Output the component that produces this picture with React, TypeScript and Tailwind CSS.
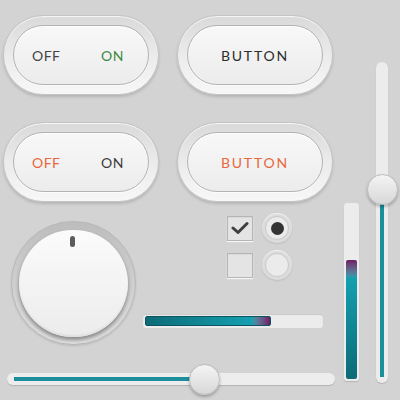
import React from "react";

const font = { fontFamily: "Lato, 'Open Sans', sans-serif" };

function Pill({ children }: { children: React.ReactNode }) {
  return (
    <div className="w-[156px] h-[80px] rounded-full p-[9px] border border-[#c4c4c4] bg-gradient-to-b from-[#d9d9d9] via-[#ebebeb] to-[#f7f7f7] shadow-[0_2px_3px_rgba(0,0,0,0.15),inset_0_1px_1px_rgba(255,255,255,0.8)]">
      <div className="w-full h-full rounded-full bg-gradient-to-b from-[#f8f8f8] to-[#ececec] border border-[#b3b3b3] shadow-[inset_0_1px_1px_rgba(255,255,255,0.9),0_1px_1px_rgba(255,255,255,0.7)] flex items-center justify-center text-[14px]" style={font}>
        {children}
      </div>
    </div>
  );
}

export default function App() {
  return (
    <div className="w-[400px] h-[400px] bg-[#d3d3d3] flex overflow-hidden" style={font}>
      {/* main column */}
      <div className="w-[342px] flex flex-col">
        <div className="flex gap-[18px] pl-[3px] pt-[15px]">
          <Pill>
            <div className="flex w-full justify-between pl-[18px] pr-[24px] tracking-[0.5px]">
              <span className="text-[#454545]">OFF</span>
              <span className="text-[#3f8a45]">ON</span>
            </div>
          </Pill>
          <Pill>
            <span className="text-[#2c2c2c] tracking-[1.8px]">BUTTON</span>
          </Pill>
        </div>
        <div className="flex gap-[18px] pl-[3px] pt-[27px]">
          <Pill>
            <div className="flex w-full justify-between pl-[18px] pr-[24px] tracking-[0.5px]">
              <span className="text-[#e8683e]">OFF</span>
              <span className="text-[#3c3c3c]">ON</span>
            </div>
          </Pill>
          <Pill>
            <span className="text-[#e8683e] tracking-[1.8px]">BUTTON</span>
          </Pill>
        </div>
        <div className="flex pt-[15px]">
          {/* knob */}
          <div className="ml-[11px] mt-[4px] w-[125px] h-[124px] rounded-full border border-[#b8b8b8] bg-gradient-to-b from-[#bdbdbd] to-[#e2e2e2] shadow-[0_1px_2px_rgba(0,0,0,0.12)] flex items-center justify-center">
            <div className="relative w-[109px] h-[107px] rounded-full bg-gradient-to-b from-[#fbfbfb] to-[#ececec] shadow-[0_3px_4px_rgba(0,0,0,0.4),inset_0_-2px_2px_rgba(0,0,0,0.05)]">
              <div className="absolute left-[51px] top-[6px] w-[5px] h-[11px] rounded-full bg-[#5c5c5c]" />
            </div>
          </div>
          <div className="ml-[7px] flex flex-col">
            <div className="ml-[84px] -mt-[4px] grid grid-cols-[26px_30px] gap-x-[9px] gap-y-[7px] items-center">
              <div className="w-[26px] h-[25px] border border-[#b5b5b5] bg-[#e4e4e4] shadow-[0_1px_1px_rgba(255,255,255,0.8),inset_0_1px_1px_rgba(0,0,0,0.05)] flex items-center justify-center">
                <svg width="18" height="14" viewBox="0 0 18 14">
                  <path d="M2 7 L7 11.5 L16 2.5" fill="none" stroke="#3f3f3f" strokeWidth="3" strokeLinecap="round" strokeLinejoin="round" />
                </svg>
              </div>
              <div className="w-[30px] h-[30px] rounded-full bg-[#dcdcdc] shadow-[0_1px_2px_rgba(0,0,0,0.1),inset_0_1px_1px_rgba(255,255,255,0.6)] flex items-center justify-center">
                <div className="w-[24px] h-[24px] rounded-full bg-[#ebebeb] border border-[#c8c8c8] flex items-center justify-center">
                  <div className="w-[13px] h-[13px] rounded-full bg-[#333]" />
                </div>
              </div>
              <div className="w-[26px] h-[25px] border border-[#b5b5b5] bg-[#e4e4e4] shadow-[0_1px_1px_rgba(255,255,255,0.8),inset_0_1px_1px_rgba(0,0,0,0.05)]" />
              <div className="w-[30px] h-[30px] rounded-full bg-[#dcdcdc] shadow-[0_1px_2px_rgba(0,0,0,0.1),inset_0_1px_1px_rgba(255,255,255,0.6)] flex items-center justify-center">
                <div className="w-[24px] h-[24px] rounded-full bg-[#ebebeb] border border-[#c8c8c8]" />
              </div>
            </div>
            {/* horizontal progress */}
            <div className="mt-[34px] w-[180px] h-[14px] rounded-[3px] bg-[#ececec] shadow-[inset_0_1px_1px_rgba(0,0,0,0.15)] p-[2px]">
              <div className="h-full w-[126px] rounded-[2px] bg-gradient-to-r from-[#0d6b77] via-[#14a0b0] via-[85%] to-[#6b1a66] border border-[#0b5560]" />
            </div>
          </div>
        </div>
        {/* horizontal slider */}
        <div className="relative ml-[7px] mt-[28px] w-[328px] h-[12px] rounded-full bg-[#ededed] shadow-[0_1px_1px_rgba(0,0,0,0.15)] px-[7px] py-[4px]">
          <div className="h-[4px] w-[188px] bg-[#1c8e9c]" />
          <div className="absolute left-[182px] top-[-9px] w-[31px] h-[31px] rounded-full bg-gradient-to-b from-[#f4f4f4] to-[#d8d8d8] border border-[#bdbdbd] shadow-[0_2px_3px_rgba(0,0,0,0.25)]" />
        </div>
      </div>
      {/* right column */}
      <div className="flex gap-[17px] pl-[2px]">
        <div className="mt-[203px] w-[15px] h-[178px] rounded-[3px] bg-[#ececec] shadow-[0_1px_1px_rgba(0,0,0,0.15)] p-[2px] flex flex-col justify-end">
          <div className="w-full h-[119px] rounded-[2px] bg-gradient-to-t from-[#0d6b77] via-[#14a0b0] via-[85%] to-[#6b1a66]" />
        </div>
        <div className="relative mt-[62px] w-[12px] h-[321px] rounded-full bg-[#ececec] shadow-[0_1px_1px_rgba(0,0,0,0.15)] flex flex-col justify-end items-center pb-[6px]">
          <div className="w-[4px] h-[174px] bg-[#1c8e9c]" />
          <div className="absolute left-[-9px] top-[112px] w-[31px] h-[31px] rounded-full bg-gradient-to-b from-[#f4f4f4] to-[#d8d8d8] border border-[#bdbdbd] shadow-[0_2px_3px_rgba(0,0,0,0.25)]" />
        </div>
      </div>
    </div>
  );
}
